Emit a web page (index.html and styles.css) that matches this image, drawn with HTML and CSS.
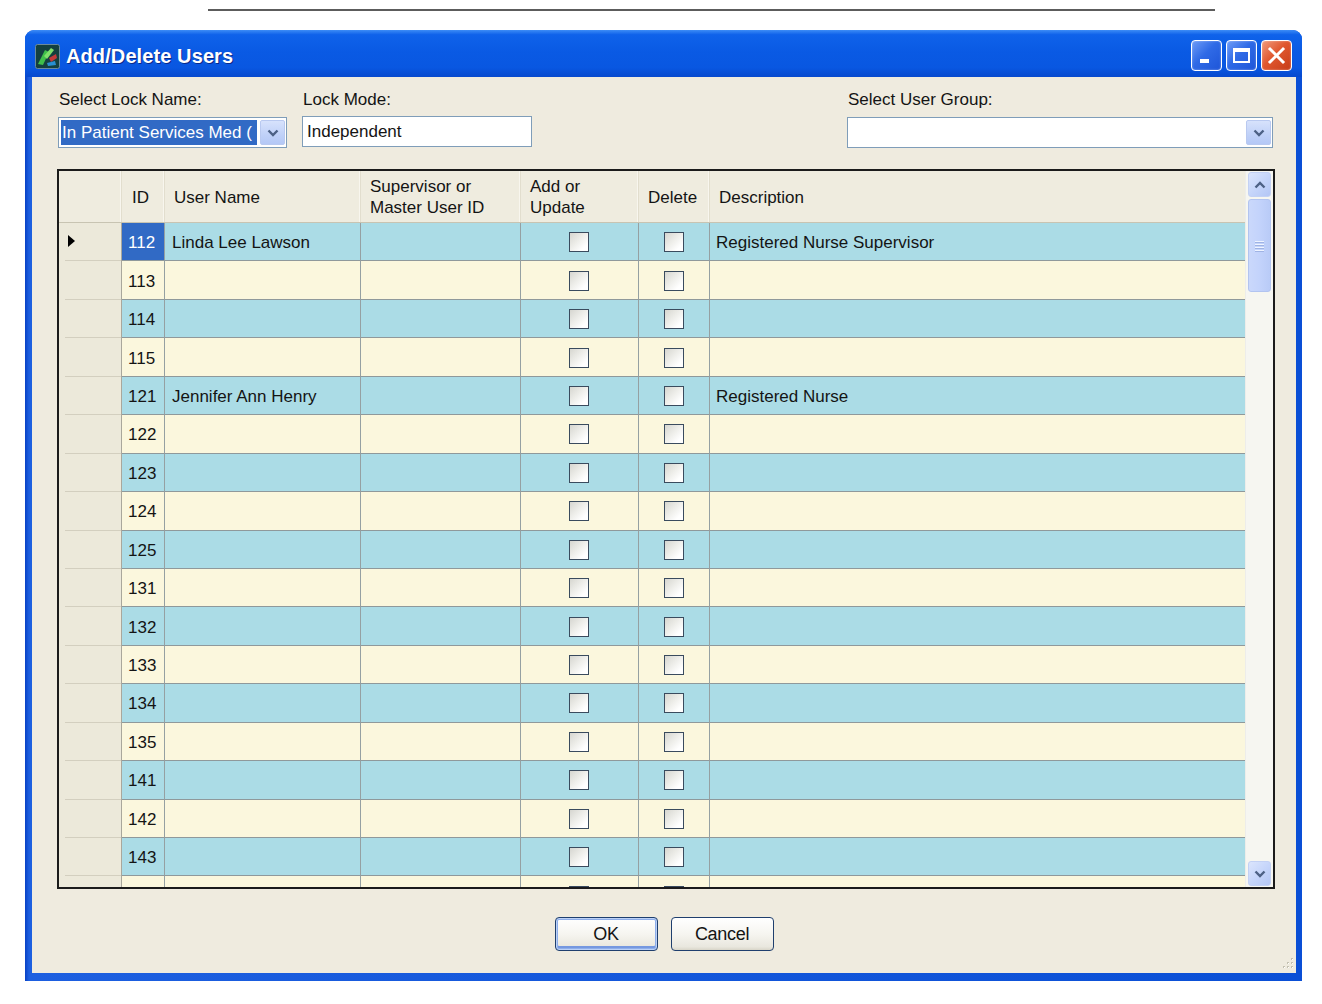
FILE: index.html
```html
<!DOCTYPE html>
<html>
<head>
<meta charset="utf-8">
<title>Add/Delete Users</title>
<link rel="stylesheet" href="styles.css">
</head>
<body>
<div class="topline"></div>
<div class="window">
  <div class="titlebar">
    <svg class="appicon" width="25" height="25" viewBox="0 0 25 25">
      <rect x="0.5" y="0.5" width="24" height="24" rx="2" fill="#14403f" stroke="#6c8a9a"/>
      <path d="M3 20 L10 6 L14 8 L8 21 Z" fill="#3fbf4a"/>
      <path d="M9 12 L16 4 L19 6 L12 15 Z" fill="#7fe06a"/>
      <path d="M14 14 L21 10 L22 14 L16 18 Z" fill="#c23a3a"/>
      <path d="M12 19 L20 17 L21 21 L13 22 Z" fill="#2a8fd0"/>
    </svg>
    <span class="title">Add/Delete Users</span>
    <div class="tbtns">
      <div class="tb min"><span class="minbar"></span></div>
      <div class="tb max"><span class="maxbox"></span></div>
      <div class="tb close">
        <svg width="19" height="19" viewBox="0 0 19 19"><path d="M3 3 L16 16 M16 3 L3 16" stroke="#fff" stroke-width="3" stroke-linecap="square"/></svg>
      </div>
    </div>
  </div>
  <div class="client">
    <div class="toprow">
      <div class="field f1">
        <div class="lbl">Select Lock Name:</div>
        <div class="combo">
          <span class="seltext">In Patient Services Med (</span>
          <span class="dd"><svg width="12" height="8" viewBox="0 0 12 8"><path d="M1.5 1.5 L6 6 L10.5 1.5" fill="none" stroke="#4d6185" stroke-width="2.4"/></svg></span>
        </div>
      </div>
      <div class="field f2">
        <div class="lbl">Lock Mode:</div>
        <div class="textbox">Independent</div>
      </div>
      <div class="field f3">
        <div class="lbl">Select User Group:</div>
        <div class="combo">
          <span class="emptytext"></span>
          <span class="dd"><svg width="12" height="8" viewBox="0 0 12 8"><path d="M1.5 1.5 L6 6 L10.5 1.5" fill="none" stroke="#4d6185" stroke-width="2.4"/></svg></span>
        </div>
      </div>
    </div>

    <div class="grid">
      <div class="table">
        <div class="hrow">
          <div class="h rhh"></div>
          <div class="h hid">ID</div>
          <div class="h">User Name</div>
          <div class="h two">Supervisor or<br>Master User ID</div>
          <div class="h two">Add or<br>Update</div>
          <div class="h">Delete</div>
          <div class="h last">Description</div>
        </div>
        <div class="body">
          <div class="row blue"><div class="rh"><span class="arrow"></span></div><div class="c id sel">112</div><div class="c">Linda Lee Lawson</div><div class="c"></div><div class="c cb"><span class="chk"></span></div><div class="c cb"><span class="chk"></span></div><div class="c desc">Registered Nurse Supervisor</div></div>
          <div class="row cream"><div class="rh"></div><div class="c id">113</div><div class="c"></div><div class="c"></div><div class="c cb"><span class="chk"></span></div><div class="c cb"><span class="chk"></span></div><div class="c desc"></div></div>
          <div class="row blue"><div class="rh"></div><div class="c id">114</div><div class="c"></div><div class="c"></div><div class="c cb"><span class="chk"></span></div><div class="c cb"><span class="chk"></span></div><div class="c desc"></div></div>
          <div class="row cream"><div class="rh"></div><div class="c id">115</div><div class="c"></div><div class="c"></div><div class="c cb"><span class="chk"></span></div><div class="c cb"><span class="chk"></span></div><div class="c desc"></div></div>
          <div class="row blue"><div class="rh"></div><div class="c id">121</div><div class="c">Jennifer Ann Henry</div><div class="c"></div><div class="c cb"><span class="chk"></span></div><div class="c cb"><span class="chk"></span></div><div class="c desc">Registered Nurse</div></div>
          <div class="row cream"><div class="rh"></div><div class="c id">122</div><div class="c"></div><div class="c"></div><div class="c cb"><span class="chk"></span></div><div class="c cb"><span class="chk"></span></div><div class="c desc"></div></div>
          <div class="row blue"><div class="rh"></div><div class="c id">123</div><div class="c"></div><div class="c"></div><div class="c cb"><span class="chk"></span></div><div class="c cb"><span class="chk"></span></div><div class="c desc"></div></div>
          <div class="row cream"><div class="rh"></div><div class="c id">124</div><div class="c"></div><div class="c"></div><div class="c cb"><span class="chk"></span></div><div class="c cb"><span class="chk"></span></div><div class="c desc"></div></div>
          <div class="row blue"><div class="rh"></div><div class="c id">125</div><div class="c"></div><div class="c"></div><div class="c cb"><span class="chk"></span></div><div class="c cb"><span class="chk"></span></div><div class="c desc"></div></div>
          <div class="row cream"><div class="rh"></div><div class="c id">131</div><div class="c"></div><div class="c"></div><div class="c cb"><span class="chk"></span></div><div class="c cb"><span class="chk"></span></div><div class="c desc"></div></div>
          <div class="row blue"><div class="rh"></div><div class="c id">132</div><div class="c"></div><div class="c"></div><div class="c cb"><span class="chk"></span></div><div class="c cb"><span class="chk"></span></div><div class="c desc"></div></div>
          <div class="row cream"><div class="rh"></div><div class="c id">133</div><div class="c"></div><div class="c"></div><div class="c cb"><span class="chk"></span></div><div class="c cb"><span class="chk"></span></div><div class="c desc"></div></div>
          <div class="row blue"><div class="rh"></div><div class="c id">134</div><div class="c"></div><div class="c"></div><div class="c cb"><span class="chk"></span></div><div class="c cb"><span class="chk"></span></div><div class="c desc"></div></div>
          <div class="row cream"><div class="rh"></div><div class="c id">135</div><div class="c"></div><div class="c"></div><div class="c cb"><span class="chk"></span></div><div class="c cb"><span class="chk"></span></div><div class="c desc"></div></div>
          <div class="row blue"><div class="rh"></div><div class="c id">141</div><div class="c"></div><div class="c"></div><div class="c cb"><span class="chk"></span></div><div class="c cb"><span class="chk"></span></div><div class="c desc"></div></div>
          <div class="row cream"><div class="rh"></div><div class="c id">142</div><div class="c"></div><div class="c"></div><div class="c cb"><span class="chk"></span></div><div class="c cb"><span class="chk"></span></div><div class="c desc"></div></div>
          <div class="row blue"><div class="rh"></div><div class="c id">143</div><div class="c"></div><div class="c"></div><div class="c cb"><span class="chk"></span></div><div class="c cb"><span class="chk"></span></div><div class="c desc"></div></div>
          <div class="row cream"><div class="rh"></div><div class="c id"></div><div class="c"></div><div class="c"></div><div class="c cb"><span class="chk"></span></div><div class="c cb"><span class="chk"></span></div><div class="c desc"></div></div>
        </div>
      </div>
      <div class="vscroll">
        <div class="sbtn"><svg width="12" height="8" viewBox="0 0 12 8"><path d="M1.5 6.5 L6 2 L10.5 6.5" fill="none" stroke="#4d6185" stroke-width="2.4"/></svg></div>
        <div class="thumb"><span class="grip"></span><span class="grip"></span><span class="grip"></span><span class="grip"></span></div>
        <div class="track"></div>
        <div class="sbtn"><svg width="12" height="8" viewBox="0 0 12 8"><path d="M1.5 1.5 L6 6 L10.5 1.5" fill="none" stroke="#4d6185" stroke-width="2.4"/></svg></div>
      </div>
    </div>

    <div class="buttons">
      <div class="btn default">OK</div>
      <div class="btn">Cancel</div>
    </div>

    <svg class="sizegrip" width="16" height="16" viewBox="0 0 16 16">
      <g fill="#c4c1b1">
        <rect x="12" y="2" width="2" height="2"/>
        <rect x="8" y="6" width="2" height="2"/><rect x="12" y="6" width="2" height="2"/>
        <rect x="4" y="10" width="2" height="2"/><rect x="8" y="10" width="2" height="2"/><rect x="12" y="10" width="2" height="2"/>
      </g>
      <g fill="#fff">
        <rect x="13" y="3" width="1" height="1"/>
        <rect x="9" y="7" width="1" height="1"/><rect x="13" y="7" width="1" height="1"/>
        <rect x="5" y="11" width="1" height="1"/><rect x="9" y="11" width="1" height="1"/><rect x="13" y="11" width="1" height="1"/>
      </g>
    </svg>
  </div>
</div>
</body>
</html>
```

FILE: styles.css
```css
html, body {
  margin: 0;
  padding: 0;
  background: #ffffff;
}

body {
  font-family: "Liberation Sans", Arial, sans-serif;
  font-size: 17px;
  color: #141414;
}

.topline {
  margin: 9px 0 0 208px;
  width: 1007px;
  height: 2px;
  background: #5c5c5c;
}

.window {
  margin: 19px 0 0 25px;
  width: 1277px;
  height: 951px;
  background: linear-gradient(to right, #0841c4 0px, #1d5fe0 4px, #0a4fd6 100%);
  border-radius: 9px 9px 0 0;
  display: flex;
  flex-direction: column;
  box-sizing: border-box;
  overflow: hidden;
}

.titlebar {
  height: 47px;
  box-sizing: border-box;
  padding: 6px 10px 0 10px;
  display: flex;
  align-items: center;
  flex-shrink: 0;
  background: linear-gradient(to bottom, #3d8cf6 0%, #0f62ea 10%, #0a5ae4 45%, #0957e1 80%, #0649ce 100%);
}

.appicon {
  flex-shrink: 0;
  margin-right: 6px;
}

.title {
  color: #fff;
  font-weight: bold;
  font-size: 20px;
  text-shadow: 1px 1px 0 #0b2a8a;
  letter-spacing: 0.1px;
}

.tbtns {
  margin-left: auto;
  display: flex;
  gap: 4px;
  margin-top: -2px;
}

.tb {
  width: 31px;
  height: 31px;
  box-sizing: border-box;
  border: 1px solid #fff;
  border-radius: 4px;
  background: linear-gradient(135deg, #6d9bf7 0%, #2f6ae6 45%, #1e55d8 100%);
  display: flex;
  align-items: center;
  justify-content: center;
  box-shadow: inset 0 0 2px rgba(255,255,255,0.5);
}

.tb.min {
  align-items: flex-end;
  justify-content: flex-start;
}

.minbar {
  display: block;
  width: 9px;
  height: 4px;
  background: #fff;
  margin: 0 0 7px 8px;
}

.maxbox {
  display: block;
  width: 17px;
  height: 15px;
  box-sizing: border-box;
  border: 2px solid #fff;
  border-top-width: 4px;
}

.tb.close {
  background: linear-gradient(135deg, #f09a7c 0%, #e0582f 45%, #c63c18 100%);
}

.client {
  position: relative;
  flex: 1;
  margin: 0 6px 8px 7px;
  background: #efebdf;
  padding: 13px 23px 0 26px;
  display: flex;
  flex-direction: column;
}

.toprow {
  display: flex;
}

.field {
  display: flex;
  flex-direction: column;
}

.f1 { width: 229px; margin-right: 15px; }
.f2 { width: 230px; }
.f3 { width: 426px; margin-left: auto; }

.lbl {
  line-height: 20px;
  margin-bottom: 7px;
  padding-left: 1px;
}

.combo {
  height: 31px;
  box-sizing: border-box;
  border: 1px solid #7f9db9;
  background: #fff;
  display: flex;
  align-items: stretch;
  padding: 2px 1px 2px 2px;
}

.seltext {
  flex: 1;
  background: #316ac5;
  color: #fff;
  white-space: nowrap;
  overflow: hidden;
  line-height: 25px;
  padding-left: 1px;
}

.emptytext { flex: 1; }

.dd {
  width: 25px;
  margin-left: 3px;
  box-sizing: border-box;
  border: 1px solid #b9c9f0;
  border-radius: 2px;
  background: linear-gradient(to bottom, #d7e2fc 0%, #c0d1f8 60%, #b4c8f6 100%);
  display: flex;
  align-items: center;
  justify-content: center;
}

.textbox {
  height: 31px;
  box-sizing: border-box;
  border: 1px solid #7f9db9;
  background: #fff;
  line-height: 29px;
  padding-left: 4px;
  margin-top: -1px;
}

.grid {
  margin: 21px 0 0 -1px;
  width: 1218px;
  height: 720px;
  box-sizing: border-box;
  border: 2px solid #1b1b1b;
  display: flex;
  background: #efebdf;
}

.table {
  width: 1186px;
  display: flex;
  flex-direction: column;
  overflow: hidden;
}

.hrow {
  height: 52px;
  flex-shrink: 0;
  display: grid;
  grid-template-columns: 63px 43px 196px 160px 118px 71px 535px;
  background: #efecdf;
  box-sizing: border-box;
  border-bottom: 1px solid #c8c4b2;
}

.h {
  display: flex;
  align-items: center;
  padding-left: 9px;
  border-right: 1px solid #e2dece;
  box-shadow: inset -1px 0 0 #f8f6ee;
  line-height: 21px;
  padding-top: 1px;
}

.h.rhh { padding-left: 0; }
.h.hid { padding-left: 10px; }
.h.last { border-right: none; box-shadow: none; }

.body {
  flex: 1;
  overflow: hidden;
}

.row {
  height: 38.44px;
  box-sizing: border-box;
  display: grid;
  grid-template-columns: 63px 43px 196px 160px 118px 71px 535px;
}

.row.blue .c { background: #abdce6; }
.row.cream .c { background: #fbf7dd; }

.c {
  display: flex;
  align-items: center;
  padding-left: 7px;
  padding-top: 3px;
  border-right: 1px solid #95a0a2;
  border-bottom: 1px solid #8f999b;
  white-space: nowrap;
  overflow: hidden;
}

.c.id { padding-left: 6px; }
.c.desc { border-right: none; padding-left: 6px; }
.row .c.sel { background: #316ac5; color: #fff; }

.c.cb {
  justify-content: center;
  padding-left: 0;
  padding-top: 1px;
}

.rh {
  background:
    linear-gradient(#d3cfbf, #d3cfbf) no-repeat 6px 100% / calc(100% - 6px) 1px,
    #ece9da;
  border-right: 1px solid #a9a79c;
  display: flex;
  align-items: center;
  padding-left: 9px;
}

.arrow {
  width: 0;
  height: 0;
  border-left: 7px solid #000;
  border-top: 6px solid transparent;
  border-bottom: 6px solid transparent;
  margin-top: -3px;
}

.chk {
  width: 20px;
  height: 20px;
  box-sizing: border-box;
  border: 1px solid #3a4b5e;
  background: linear-gradient(135deg, #d6d6d0 0%, #eeeeea 45%, #ffffff 80%);
  margin-right: 1px;
}

.vscroll {
  width: 28px;
  box-sizing: border-box;
  padding: 1px 2px 1px 2px;
  display: flex;
  flex-direction: column;
  background: #f6f6f1;
  border-left: 1px solid #ededea;
}

.sbtn {
  height: 25px;
  flex-shrink: 0;
  box-sizing: border-box;
  border: 1px solid #c3d1f4;
  border-radius: 3px;
  background: linear-gradient(135deg, #dbe5fd 0%, #c4d4fa 55%, #b3c6f5 100%);
  display: flex;
  align-items: center;
  justify-content: center;
}

.thumb {
  height: 93px;
  margin-top: 2px;
  box-sizing: border-box;
  border: 1px solid #b2c4f0;
  border-radius: 3px;
  background: linear-gradient(to right, #cad8fb 0%, #c3d3fb 50%, #b9cbf7 100%);
  display: flex;
  flex-direction: column;
  align-items: center;
  justify-content: center;
  gap: 2px;
}

.grip {
  display: block;
  width: 9px;
  height: 1px;
  background: #eef3ff;
  box-shadow: 0 1px 0 #9fb3e4;
}

.track { flex: 1; }

.buttons {
  margin-top: 28px;
  display: flex;
  justify-content: center;
  gap: 13px;
  padding-right: 3px;
}

.btn {
  width: 103px;
  height: 34px;
  box-sizing: border-box;
  border: 1px solid #1f3f6e;
  border-radius: 4px;
  background: linear-gradient(to bottom, #ffffff 0%, #f6f5f0 50%, #e9e7de 90%, #d8d5c8 100%);
  display: flex;
  align-items: center;
  justify-content: center;
  font-size: 18px;
  letter-spacing: -0.3px;
}

.btn.default {
  box-shadow: inset 0 0 0 1px #bcd1f6, inset 0 0 0 2px #8eaeea, inset 0 -2px 0 2px #7598e0;
}

.sizegrip {
  position: absolute;
  right: 1px;
  bottom: 1px;
}
```
